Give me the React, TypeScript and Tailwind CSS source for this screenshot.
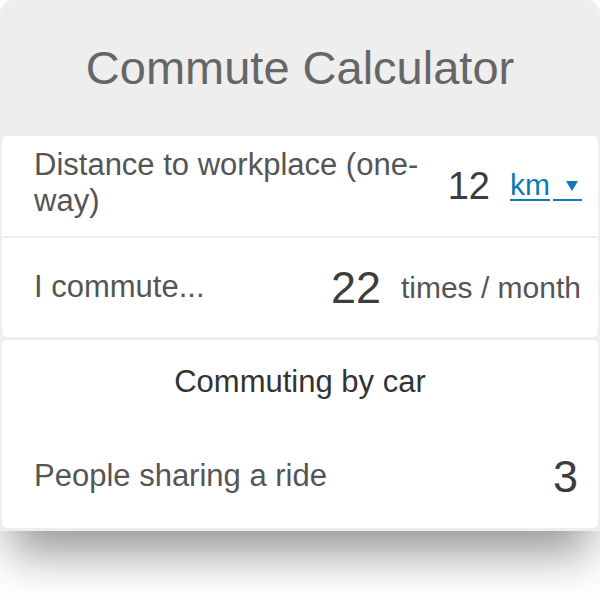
export default function App() {
  return (
    <div className="min-h-[600px] w-[600px] bg-white" style={{ fontFamily: '"Liberation Sans", Arial, sans-serif' }}>
      <div className="rounded-t-[14px] bg-[#eeeeee] px-[2px] pb-[3px] shadow-[0_32px_48px_-10px_rgba(0,0,0,0.42)]">
        <div className="flex h-[136px] items-center justify-center">
          <h1 className="text-[47px] font-normal text-[#666666]">Commute Calculator</h1>
        </div>

        <div className="rounded-[5px] bg-white">
          <div className="flex h-[100px] items-center gap-5 pl-8 pr-4">
            <div className="-mt-[6px] flex-1 text-[31px] leading-[36px] text-[#555555]">Distance to workplace (one-way)</div>
            <div className="text-[38px] text-[#3d3d3d]">12</div>
            <div className="flex items-end text-[30px] leading-[28px] text-[#0e7ab8]">
              <span className="border-b-2 border-[#0e7ab8]">km</span>
              <span className="ml-[3px] flex h-[30px] w-[29px] items-center justify-end border-b-2 border-[#0e7ab8] pr-[4px] pt-[2px]">
                <svg width="12" height="10" viewBox="0 0 12 10">
                  <path d="M0 0 H12 L6 10 Z" fill="#0e7ab8" />
                </svg>
              </span>
            </div>
          </div>
          <div className="h-[2px] bg-[#eeeeee]" />
          <div className="flex h-[99px] items-center gap-5 pl-8 pr-[17px]">
            <div className="flex-1 text-[31px] text-[#555555]">I commute...</div>
            <div className="text-[45px] leading-none text-[#3d3d3d]">22</div>
            <div className="text-[30px] text-[#555555]">times / month</div>
          </div>
        </div>

        <div className="mt-[3px] rounded-[5px] bg-white">
          <div className="flex h-[85px] items-center justify-center text-[31px] text-[#333333]">Commuting by car</div>
          <div className="flex h-[103px] items-center pl-8 pr-5">
            <div className="flex-1 text-[31px] text-[#555555]">People sharing a ride</div>
            <div className="text-[45px] leading-none text-[#3d3d3d]">3</div>
          </div>
        </div>
      </div>
    </div>
  );
}
